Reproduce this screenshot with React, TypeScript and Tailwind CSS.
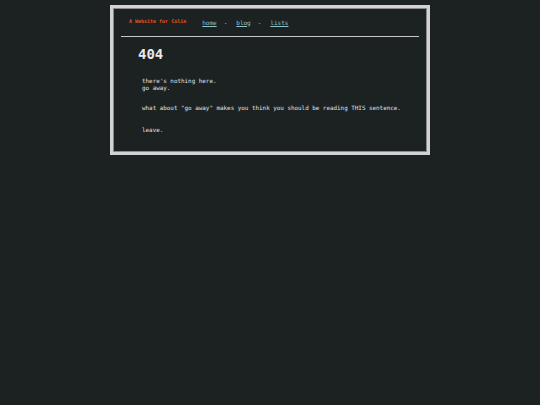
import React from "react";

export default function App() {
  const mono = { fontFamily: '"DejaVu Sans Mono", "Liberation Mono", monospace' };
  return (
    <div className="w-full h-[405px] bg-[#1c2122] pt-[5px]" style={mono}>
      <div className="mx-auto w-[320px] border-[3px] border-[#d2d2d2] shadow-[inset_0_0_0_1px_#8a8a8a] pb-[18px]">
        <div className="flex items-center h-[28px] pl-[16px]">
          <span className="text-[5px] font-bold text-[#e5561c]">A Website for Colin</span>
          <nav className="flex items-center ml-[16px] text-[6px] text-[#c8c8c8]">
            <a className="text-[#90c2ca] underline">home</a>
            <span className="mx-[7px]">-</span>
            <a className="text-[#90c2ca] underline ml-[2px]">blog</a>
            <span className="mx-[7px]">-</span>
            <a className="text-[#90c2ca] underline ml-[2px]">lists</a>
          </nav>
        </div>
        <div className="mx-[8px] h-px bg-[#c8c8c8]" />
        <div className="pl-[25px] pt-[9px]">
          <h1 className="text-[14px] leading-[16px] font-bold text-[#e8e8e8]">404</h1>
        </div>
        <div className="pl-[29px] pt-[16px] text-[5.9px] leading-[7px] text-[#e0e0e0]">
          <p>there's nothing here.</p>
          <p>go away.</p>
          <p className="mt-[13px]">what about "go away" makes you think you should be reading THIS sentence.</p>
          <p className="mt-[15px]">leave.</p>
        </div>
      </div>
    </div>
  );
}
